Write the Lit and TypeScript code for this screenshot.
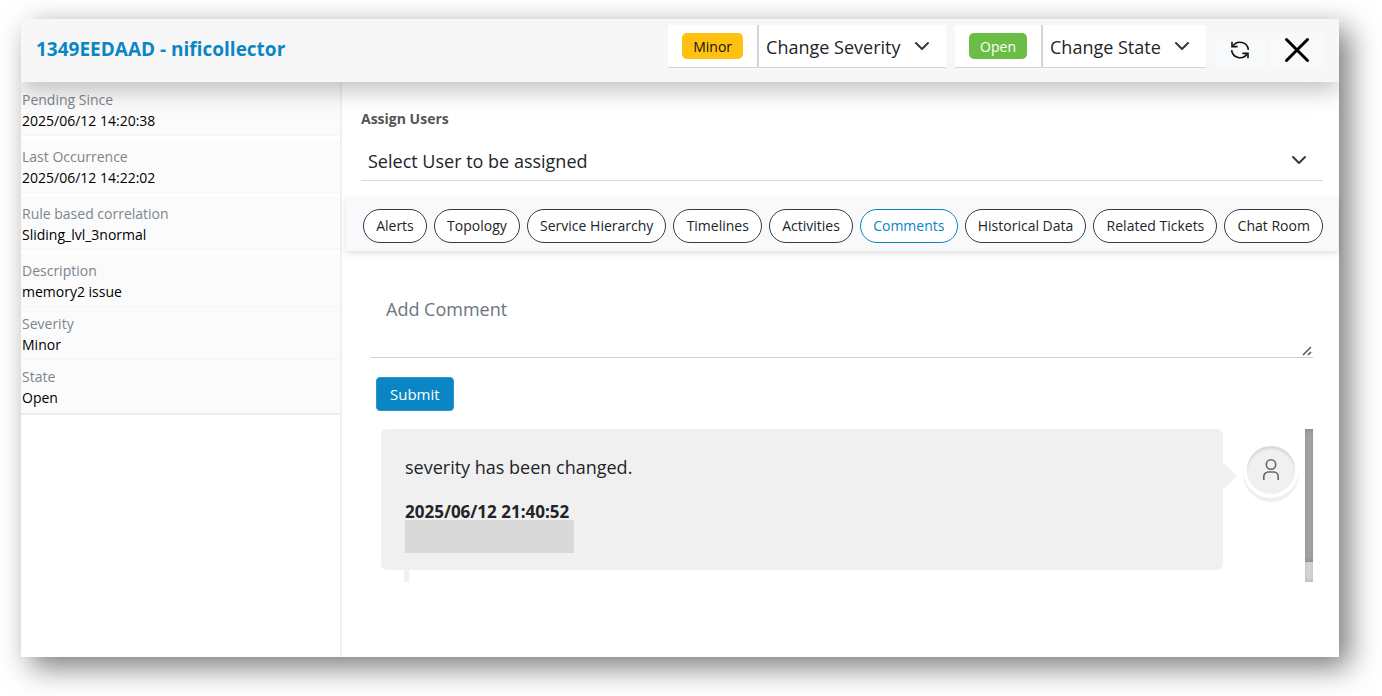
import { LitElement, html, css, svg } from "lit";
import { customElement, property, state } from "lit/decorators.js";
import { classMap } from "lit/directives/class-map.js";

const chevron = svg`<path d="m2 5 6 6 6-6" fill="none" stroke="#343a40" stroke-width="2" stroke-linecap="round" stroke-linejoin="round"/>`;

@customElement("pick-list")
export class PickList extends LitElement {
  @property() label = "";
  @property({ attribute: false }) options: string[] = [];

  static styles = css`
    :host {
      display: block;
    }
    .wrap {
      display: grid;
      grid-template-columns: minmax(0, 1fr);
      align-items: center;
      height: 100%;
    }
    select,
    svg {
      grid-area: 1 / 1;
    }
    select {
      appearance: none;
      box-sizing: border-box;
      width: 100%;
      height: 100%;
      margin: 0;
      padding: 2px 40px 0 7px;
      border: 0;
      background: transparent;
      color: #212529;
      font: 18px/24px "Open Sans", "Noto Sans", sans-serif;
    }
    svg {
      justify-self: end;
      width: 16px;
      height: 16px;
      margin-right: 16px;
      pointer-events: none;
    }
  `;

  render() {
    return html`<div class="wrap">
      <select aria-label=${this.label}>
        ${this.options.map((o) => html`<option>${o}</option>`)}
      </select>
      <svg viewBox="0 0 16 16" aria-hidden="true">${chevron}</svg>
    </div>`;
  }
}

@customElement("app-root")
export class AppRoot extends LitElement {
  @state() private tab = "Comments";

  private facts = [
    { name: "Pending Since", value: "2025/06/12 14:20:38", spaced: true },
    { name: "Last Occurrence", value: "2025/06/12 14:22:02", spaced: true },
    { name: "Rule based correlation", value: "Sliding_lvl_3normal", spaced: true },
    { name: "Description", value: "memory2 issue", spaced: false },
    { name: "Severity", value: "Minor", spaced: false },
    { name: "State", value: "Open", spaced: false },
  ];

  private tabs = [
    "Alerts",
    "Topology",
    "Service Hierarchy",
    "Timelines",
    "Activities",
    "Comments",
    "Historical Data",
    "Related Tickets",
    "Chat Room",
  ];

  static styles = css`
    :host {
      display: flex;
      box-sizing: border-box;
      min-height: 100vh;
      padding: 19px 43px 39px 21px;
      overflow: hidden;
      background: #fff;
      color: #212529;
      font: 14px/21px "Open Sans", "Noto Sans", sans-serif;
    }
    .card {
      flex: 1;
      min-width: 0;
      display: flex;
      flex-direction: column;
      background: #fff;
      box-shadow: 10px 10px 28px rgba(0, 0, 0, 0.53);
    }
    header {
      position: relative;
      z-index: 1;
      display: flex;
      align-items: flex-start;
      box-sizing: border-box;
      height: 63px;
      padding: 6px 16px 0 15px;
      background: #f7f7f7;
      box-shadow: 0 8px 24px rgba(0, 0, 0, 0.25);
      clip-path: inset(0 0 -40px 0);
    }
    h1 {
      flex: 1;
      margin: 0;
      padding-top: 12px;
      color: #0a86c4;
      font-size: 19px;
      line-height: 24px;
      font-weight: 700;
    }
    .field {
      display: flex;
      box-sizing: border-box;
      height: 43px;
      margin-right: 9px;
      background: #fff;
      border-bottom: 1px solid #d2d5d8;
    }
    .tag {
      display: flex;
      align-items: flex-start;
      padding: 8px 14px 0;
      border-right: 2px solid #d4d4d4;
    }
    .badge {
      box-sizing: border-box;
      height: 26px;
      padding: 0 11px;
      border-radius: 5px;
      background: #fec111;
      color: #111;
      line-height: 27px;
    }
    .badge.open {
      background: #6abd45;
      color: #fff;
    }
    .severity {
      width: 187px;
    }
    .state {
      width: 163px;
    }
    .tool {
      display: grid;
      place-items: center;
      height: 34px;
      margin: 8px 0 0;
      padding: 0;
      border: 0;
      border-radius: 4px;
      background: #f8f9fa;
    }
    .refresh {
      width: 50px;
      margin-right: 5px;
    }
    .close {
      width: 53px;
    }
    .body {
      flex: 1;
      display: flex;
      min-height: 0;
    }
    aside {
      flex: none;
      box-sizing: border-box;
      width: 321px;
      border-right: 2px solid #f0f0f0;
    }
    dl {
      margin: 0;
      padding-top: 1px;
      border-bottom: 2px solid #ededed;
      background: #fff;
    }
    .fact {
      box-sizing: border-box;
      padding: 6px 1px 4px;
      background: #fbfbfb;
      border-bottom: 1px solid #f6f6f6;
    }
    .fact.spaced {
      margin-bottom: 4px;
    }
    dt {
      color: #7b858e;
    }
    dd {
      margin: 0;
      color: #000;
    }
    main {
      flex: 1;
      min-width: 0;
      padding-left: 4px;
    }
    .assign {
      display: block;
      padding: 26px 15px 0;
      color: #555;
      font-size: 14px;
      font-weight: 700;
    }
    .users {
      height: 40px;
      margin: 11px 16px 17px 15px;
      border-bottom: 1px solid #d5dde4;
    }
    nav {
      display: flex;
      gap: 7px;
      padding: 11px 15px 8px 17px;
      margin-right: 1px;
      background: #f8f9fa;
      box-shadow: 0 2px 6px rgba(0, 0, 0, 0.14);
    }
    .pill {
      flex: 1 1 auto;
      height: 34px;
      padding: 0 12px 2px;
      border: 1px solid #343a40;
      border-radius: 17px;
      background: #fff;
      color: #212529;
      font: inherit;
      white-space: nowrap;
    }
    .pill.on {
      border-color: #0a86c4;
      color: #0a86c4;
    }
    .panel {
      padding: 35px 26px 0 25px;
    }
    textarea {
      display: block;
      box-sizing: border-box;
      width: 100%;
      height: 72px;
      padding: 11px 15px;
      border: 0;
      border-bottom: 1px solid #ced0d4;
      background: transparent;
      color: #212529;
      font: 18px/24px "Open Sans", "Noto Sans", sans-serif;
      resize: vertical;
    }
    textarea::placeholder {
      color: #6c757d;
      opacity: 1;
    }
    textarea::-webkit-resizer {
      background: url("data:image/svg+xml,%3Csvg xmlns='http://www.w3.org/2000/svg' width='15' height='15'%3E%3Cpath d='M5 13 13 5M10 13l3-3' stroke='%23555' stroke-width='1.500'/%3E%3C/svg%3E")
        right bottom no-repeat;
    }
    .submit {
      height: 34px;
      margin: 19px 5px 18px;
      padding: 0 13px;
      border: 1px solid #2b95cb;
      border-radius: 4px;
      background: #0a86c4;
      color: #fff;
      font: 15px/24px "Open Sans", "Noto Sans", sans-serif;
      display: block;
    }
    .feed {
      display: flex;
      height: 153px;
      overflow: hidden;
    }
    .thread {
      flex: 1;
      min-width: 0;
      padding: 0 10px;
    }
    .comment {
      display: flex;
      align-items: flex-start;
    }
    .bubble {
      flex: 1;
      box-sizing: border-box;
      height: 141px;
      padding: 26px 24px 0;
      border-radius: 6px;
      background: #f0f0f0;
    }
    .bubble p {
      margin: 0 0 20px;
      font-size: 18px;
      line-height: 25px;
    }
    .bubble time {
      display: block;
      height: 20px;
      font-size: 17px;
      line-height: 24px;
      font-weight: 700;
    }
    .author {
      width: 169px;
      height: 33px;
      background: #d9d9d9;
    }
    .tip {
      width: 14px;
      height: 28px;
      margin: 33px 10px 0 0;
      background: #f0f0f0;
      clip-path: polygon(0 0, 100% 50%, 0 100%);
    }
    .avatar {
      display: grid;
      place-items: center;
      width: 48px;
      height: 48px;
      margin-top: 17px;
      border-radius: 50%;
      background: #f0f0f0;
      box-shadow:
        inset 0 3px 2px #d9d9d9,
        0 0 0 4px #fff,
        0 4px 0 4px #efefef;
    }
    .stem {
      width: 5px;
      height: 12px;
      margin-left: 23px;
      background: #f0f0f0;
    }
    .track {
      width: 8px;
      background: #dedede;
      box-shadow: inset 0 0 6px rgba(0, 0, 0, 0.2);
    }
    .thumb {
      height: 133px;
      background: #adadad;
      box-shadow: inset 0 0 6px rgba(0, 0, 0, 0.25);
    }
  `;

  render() {
    return html`<div class="card">
      <header>
        <h1>1349EEDAAD - nificollector</h1>
        <div class="field">
          <div class="tag"><span class="badge">Minor</span></div>
          <pick-list class="severity" label="Change severity"
            .options=${["Change Severity", "Critical", "Major", "Minor"]}></pick-list>
        </div>
        <div class="field">
          <div class="tag"><span class="badge open">Open</span></div>
          <pick-list class="state" label="Change state"
            .options=${["Change State", "Open", "Closed"]}></pick-list>
        </div>
        <button class="tool refresh" aria-label="Refresh">
          <svg width="20" height="20" viewBox="0 0 20 20" fill="none" stroke="#111" stroke-width="1.6">
            <path d="M18.4 9.8A8.5 8.5 0 0 0 2.8 6.2M1.6 10.2a8.5 8.5 0 0 0 15.6 3.6" />
            <path d="M2 1.8v4.8h5.6M18 18.2v-4.8h-5.6" />
          </svg>
        </button>
        <button class="tool close" aria-label="Close">
          <svg width="26" height="26" viewBox="0 0 26 26" fill="none" stroke="#000" stroke-width="3" stroke-linecap="round">
            <path d="m2.5 2.500 21 21M23.500 2.500l-21 21" />
          </svg>
        </button>
      </header>
      <div class="body">
        <aside>
          <dl>
            ${this.facts.map(
              (f) => html`<div class=${classMap({ fact: true, spaced: f.spaced })}>
                <dt>${f.name}</dt>
                <dd>${f.value}</dd>
              </div>`
            )}
          </dl>
        </aside>
        <main>
          <span class="assign">Assign Users</span>
          <pick-list class="users" label="Assign Users"
            .options=${["Select User to be assigned"]}></pick-list>
          <nav>
            ${this.tabs.map(
              (t) => html`<button
                class=${classMap({ pill: true, on: t === this.tab })}
                @click=${() => (this.tab = t)}
              >${t}</button>`
            )}
          </nav>
          <section class="panel">
            <textarea aria-label="Comment" placeholder="Add Comment"></textarea>
            <button class="submit">Submit</button>
            <div class="feed">
              <div class="thread">
                <article class="comment">
                  <div class="bubble">
                    <p>severity has been changed.</p>
                    <time>2025/06/12 21:40:52</time>
                    <div class="author"></div>
                  </div>
                  <div class="tip"></div>
                  <div class="avatar">
                    <svg width="18" height="24" viewBox="0 0 18 24" fill="none" stroke="#666" stroke-width="1.6">
                      <circle cx="9" cy="6.500" r="4.700" />
                      <path d="M1.800 22v-3.500a4.500 4.500 0 0 1 4.500-4.500h5.400a4.500 4.500 0 0 1 4.500 4.500V22" />
                    </svg>
                  </div>
                </article>
                <div class="stem"></div>
              </div>
              <div class="track"><div class="thumb"></div></div>
            </div>
          </section>
        </main>
      </div>
    </div>`;
  }
}
